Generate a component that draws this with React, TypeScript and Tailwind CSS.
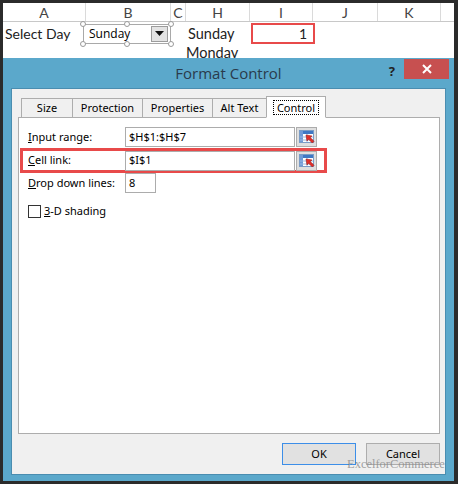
import React from 'react'

const cols = [
  { label: 'A', w: 'w-[83px]' },
  { label: 'B', w: 'w-[85px]' },
  { label: 'C', w: 'w-[15px]' },
  { label: 'H', w: 'w-[64px]' },
  { label: 'I', w: 'w-[63px]' },
  { label: 'J', w: 'w-[65px]' },
  { label: 'K', w: 'w-[63px]' },
]

function PickIcon() {
  return (
    <svg width="16" height="14" viewBox="0 0 16 14">
      <rect x="0.5" y="0.5" width="14" height="12" fill="#fff" stroke="#7a9cc6" />
      <rect x="1" y="1" width="13" height="3" fill="#3f78c4" />
      <rect x="1" y="1" width="3" height="11" fill="#6f9ad6" />
      <line x1="1" y1="7" x2="14" y2="7" stroke="#9bb7e0" />
      <line x1="1" y1="10" x2="14" y2="10" stroke="#9bb7e0" />
      <line x1="8" y1="4" x2="8" y2="12" stroke="#9bb7e0" />
      <path d="M7 5 L13 6 L11.3 7.6 L15 11.3 L13.3 13 L9.6 9.3 L8 11 Z" fill="#e0302a" stroke="#a01c18" strokeWidth="0.6" />
    </svg>
  )
}

function Handle({ className }: { className: string }) {
  return <span className={`absolute w-[6px] h-[6px] rounded-full bg-white border border-[#9a9a9a] ${className}`} />
}

function Tab({ label, active }: { label: string; active?: boolean }) {
  if (active) {
    return (
      <div className="h-[22px] -mb-px px-[4px] pt-[3px] bg-white border border-[#adadad] border-b-white relative z-10 flex justify-center">
        <span className="px-[3px] h-[15px] leading-[13px] border border-dotted border-black">{label}</span>
      </div>
    )
  }
  return (
    <div className="h-[19px] mt-[2px] bg-[#f0f0f0] border border-[#adadad] border-b-0 flex items-center justify-center">
      {label}
    </div>
  )
}

function Field({ value, w, pick }: { value: string; w: string; pick?: boolean }) {
  return (
    <div className="flex items-center">
      <div className={`${w} h-[20px] bg-white border border-[#acacac] pl-[3px] flex items-center text-black`}>{value}</div>
      {pick && (
        <div className="ml-px w-[21px] h-[20px] bg-[#dfdfdf] border border-[#acacac] flex items-center justify-center">
          <PickIcon />
        </div>
      )}
    </div>
  )
}

export default function App() {
  return (
    <div className="w-[458px] h-[484px] bg-[#2b2b2b] pt-[3px] pl-[3px] pr-[4px] pb-[3px] flex flex-col overflow-hidden relative">
      {/* sheet */}
      <div className="h-[55px] bg-white overflow-hidden font-['Lato',sans-serif] text-[14px] text-[#222] shrink-0">
        <div className="flex h-[19px] border-b border-[#c8c8c8]">
          {cols.map((c) => (
            <div key={c.label} className={`${c.w} shrink-0 border-r border-[#dadada] flex items-center justify-center text-[14px] text-[#444]`}>
              {c.label}
            </div>
          ))}
        </div>
        <div className="flex h-[23px] items-center">
          <div className="w-[80px] shrink-0 pl-[2px]">Select Day</div>
          <div className="relative w-[88px] h-[20px] shrink-0 border border-[#a9a9a9] flex items-center justify-between pl-[5px] pr-[2px] font-['Open_Sans',sans-serif] text-[12px] text-black">
            <span>Sunday</span>
            <span className="w-[17px] h-[16px] bg-[#e3e3e3] border border-[#9c9c9c] flex items-center justify-center">
              <svg width="9" height="5" viewBox="0 0 9 5"><path d="M0 0 H9 L4.5 5 Z" fill="#111" /></svg>
            </span>
            <Handle className="-left-[4px] -top-[4px]" />
            <Handle className="left-[40px] -top-[4px]" />
            <Handle className="-right-[4px] -top-[4px]" />
            <Handle className="-left-[4px] -bottom-[4px]" />
            <Handle className="left-[40px] -bottom-[4px]" />
            <Handle className="-right-[4px] -bottom-[4px]" />
          </div>
          <div className="w-[17px] shrink-0" />
          <div className="w-[63px] shrink-0 text-[14.5px]">Sunday</div>
          <div className="w-[64px] h-[21px] shrink-0 border-[2px] border-[#e84a4a] flex items-center justify-end pr-[6px]">1</div>
        </div>
        <div className="flex -mt-[2px]">
          <div className="w-[183px] shrink-0" />
          <div className="leading-[20px] text-[14.5px]">Monday</div>
        </div>
      </div>

      {/* dialog */}
      <div className="flex-1 bg-[#5ba8cb] flex flex-col px-[8px] pb-[6px] font-['Noto_Sans',sans-serif] text-[11px] text-black">
        <div className="h-[30px] relative flex items-center justify-center shrink-0">
          <span className="text-[15px] text-[#2a3b4c] font-['Open_Sans',sans-serif] mt-[1px]">Format Control</span>
          <span className="absolute right-[51px] top-[4px] text-[13px] font-bold text-[#222]">?</span>
          <div className="absolute -right-[3px] top-[1px] w-[45px] h-[20px] bg-[#c75050] flex items-center justify-center">
            <svg width="10" height="10" viewBox="0 0 10 10"><path d="M1 1 L9 9 M9 1 L1 9" stroke="#fff" strokeWidth="2" /></svg>
          </div>
        </div>
        <div className="flex-1 bg-[#f0f0f0] border border-[#4a8db0] flex flex-col pt-[7px] pl-[6px] pr-[5px]">
          <div className="flex pl-[3px] h-[21px] shrink-0">
            <div className="w-[52px]"><Tab label="Size" /></div>
            <div className="w-[71px] -ml-px"><Tab label="Protection" /></div>
            <div className="w-[71px] -ml-px"><Tab label="Properties" /></div>
            <div className="w-[55px] -ml-px"><Tab label="Alt Text" /></div>
            <div className="w-[60px] -ml-px"><Tab label="Control" active /></div>
          </div>
          <div className="h-[317px] bg-white border border-[#adadad] flex flex-col pt-[9px] pl-[9px]">
            <div className="flex items-center h-[20px]">
              <span className="w-[97px]"><span className="underline">I</span>nput range:</span>
              <Field value="$H$1:$H$7" w="w-[170px]" pick />
            </div>
            <div className="flex items-center h-[25px] mt-px -ml-[8px] w-[307px] border-[3px] border-[#e84a4a] pl-[5px]">
              <span className="w-[97px]"><span className="underline">C</span>ell link:</span>
              <Field value="$I$1" w="w-[170px]" pick />
            </div>
            <div className="flex items-center h-[20px]">
              <span className="w-[97px]"><span className="underline">D</span>rop down lines:</span>
              <Field value="8" w="w-[31px]" />
            </div>
            <div className="flex items-center gap-[3px] mt-[10px]">
              <span className="w-[13px] h-[13px] bg-white border border-[#333]" />
              <span><span className="underline">3</span>-D shading</span>
            </div>
          </div>
          <div className="flex justify-end gap-[10px] mt-[9px]">
            <div className="w-[74px] h-[22px] bg-[#e1e1e1] border border-[#3c8ee8] flex items-center justify-center">OK</div>
            <div className="w-[74px] h-[22px] bg-[#e1e1e1] border border-[#adadad] flex items-center justify-center">Cancel</div>
          </div>
        </div>
      </div>

      {/* watermark */}
      <span className="absolute left-[347px] top-[455px] whitespace-nowrap font-['Liberation_Serif',serif] text-[12.5px] text-[#8a8a8a]/80 pointer-events-none">
        ExcelforCommerce
      </span>
    </div>
  )
}
